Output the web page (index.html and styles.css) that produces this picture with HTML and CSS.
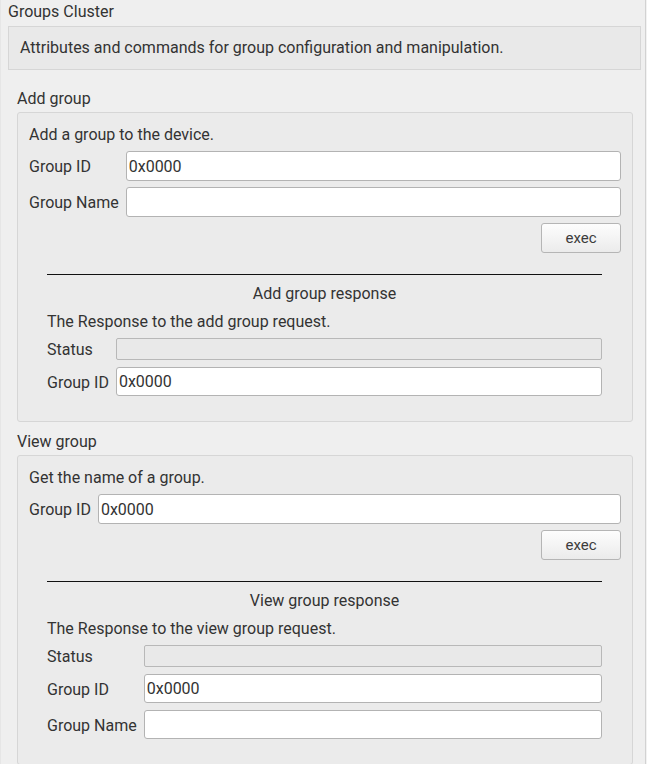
FILE: index.html
```html
<!DOCTYPE html>
<html>
<head>
  <title>Groups Cluster</title>
  <meta charset="UTF-8">
  <meta name="viewport" content="width=device-width, initial-scale=1.0">
  <link rel="stylesheet" href="styles.css">
</head>
<body>
  <div class="cluster">
    <div class="cluster-title">Groups Cluster</div>
    <div class="cluster-desc">Attributes and commands for group configuration and manipulation.</div>

    <div class="commands">
      <div class="cmd-title">Add group</div>
      <div class="cmd-box">
        <div class="cmd-desc">Add a group to the device.</div>
        <div class="form">
          <label>Group ID</label>
          <input type="text" value="0x0000">
          <label>Group Name</label>
          <input type="text" value="">
        </div>
        <div class="actions">
          <button class="exec-btn">exec</button>
        </div>

        <div class="response">
          <div class="response-title">Add group response</div>
          <div class="response-desc">The Response to the add group request.</div>
          <div class="form response-form">
            <label>Status</label>
            <div class="status-field"></div>
            <label>Group ID</label>
            <input type="text" value="0x0000">
          </div>
        </div>
      </div>

      <div class="cmd-title">View group</div>
      <div class="cmd-box">
        <div class="cmd-desc">Get the name of a group.</div>
        <div class="form">
          <label>Group ID</label>
          <input type="text" value="0x0000">
        </div>
        <div class="actions">
          <button class="exec-btn">exec</button>
        </div>

        <div class="response">
          <div class="response-title">View group response</div>
          <div class="response-desc">The Response to the view group request.</div>
          <div class="form response-form">
            <label>Status</label>
            <div class="status-field"></div>
            <label>Group ID</label>
            <input type="text" value="0x0000">
            <label>Group Name</label>
            <input type="text" value="">
          </div>
        </div>
      </div>
    </div>
  </div>
</body>
</html>
```

FILE: styles.css
```css
html, body {
  margin: 0;
  padding: 0;
  height: 100%;
  overflow: hidden;
}

body {
  font-family: Roboto, 'Liberation Sans', sans-serif;
  font-size: 16px;
  line-height: 20px;
  color: #333333;
  background-color: #f2f2f2;
}

.cluster {
  width: 646px;
  min-height: 100%;
  box-sizing: border-box;
  padding: 2px 4px 0 8px;
  background-color: #efefef;
  border-left: 1px solid #e6e6e6;
  border-right: 1px solid #d2d2d2;
}

.cluster-title {
  margin-left: -1px;
  height: 20px;
}

.cluster-desc {
  margin-top: 4px;
  margin-left: -1px;
  height: 42px;
  display: flex;
  align-items: center;
  padding: 0 11px;
  line-height: 22px;
  background-color: #e9e9e9;
  border: 1px solid #d6d6d6;
}

.commands {
  padding: 0 8px 0 8px;
}

.cmd-title {
  margin-top: 19px;
  margin-bottom: 3px;
}

.commands .cmd-box + .cmd-title {
  margin-top: 10px;
}

.cmd-box {
  background-color: #ebebeb;
  border: 1px solid #d6d6d6;
  border-radius: 3px;
  padding: 12px 11px 25px 11px;
}

.cmd-desc {
  margin-bottom: 6px;
}

.form {
  display: grid;
  grid-template-columns: auto 1fr;
  column-gap: 7px;
  row-gap: 6px;
  align-items: center;
}

.form label {
  white-space: nowrap;
  padding-top: 2px;
}

.form input[type="text"] {
  height: 30px;
  box-sizing: border-box;
  border: 1px solid #b3b3b3;
  border-radius: 3px;
  background-color: #ffffff;
  padding: 0 2px;
  font-family: inherit;
  font-size: 16px;
  color: #333333;
  margin: 0;
  outline: none;
}

.actions {
  display: flex;
  justify-content: flex-end;
  margin-top: 6px;
}

.exec-btn {
  width: 80px;
  height: 30px;
  border: 1px solid #b5b5b5;
  border-radius: 3px;
  background: linear-gradient(#fdfdfd, #ebebeb);
  font-family: Roboto, 'Liberation Sans', sans-serif;
  font-size: 15px;
  color: #3c3c3c;
  padding: 0;
  cursor: pointer;
}

.response {
  margin: 21px 19px 0 18px;
  border-top: 1px solid #111111;
  padding-top: 9px;
}

.response-title {
  text-align: center;
}

.response-desc {
  margin-top: 8px;
  margin-bottom: 5px;
}

.response-form {
  row-gap: 7px;
}

.response-form label {
  padding-top: 3px;
}

.response-form input[type="text"] {
  height: 29px;
}

.status-field {
  height: 22px;
  box-sizing: border-box;
  border: 1px solid #b8b8b8;
  border-radius: 2px;
  background-color: #e9e9e9;
}
```
